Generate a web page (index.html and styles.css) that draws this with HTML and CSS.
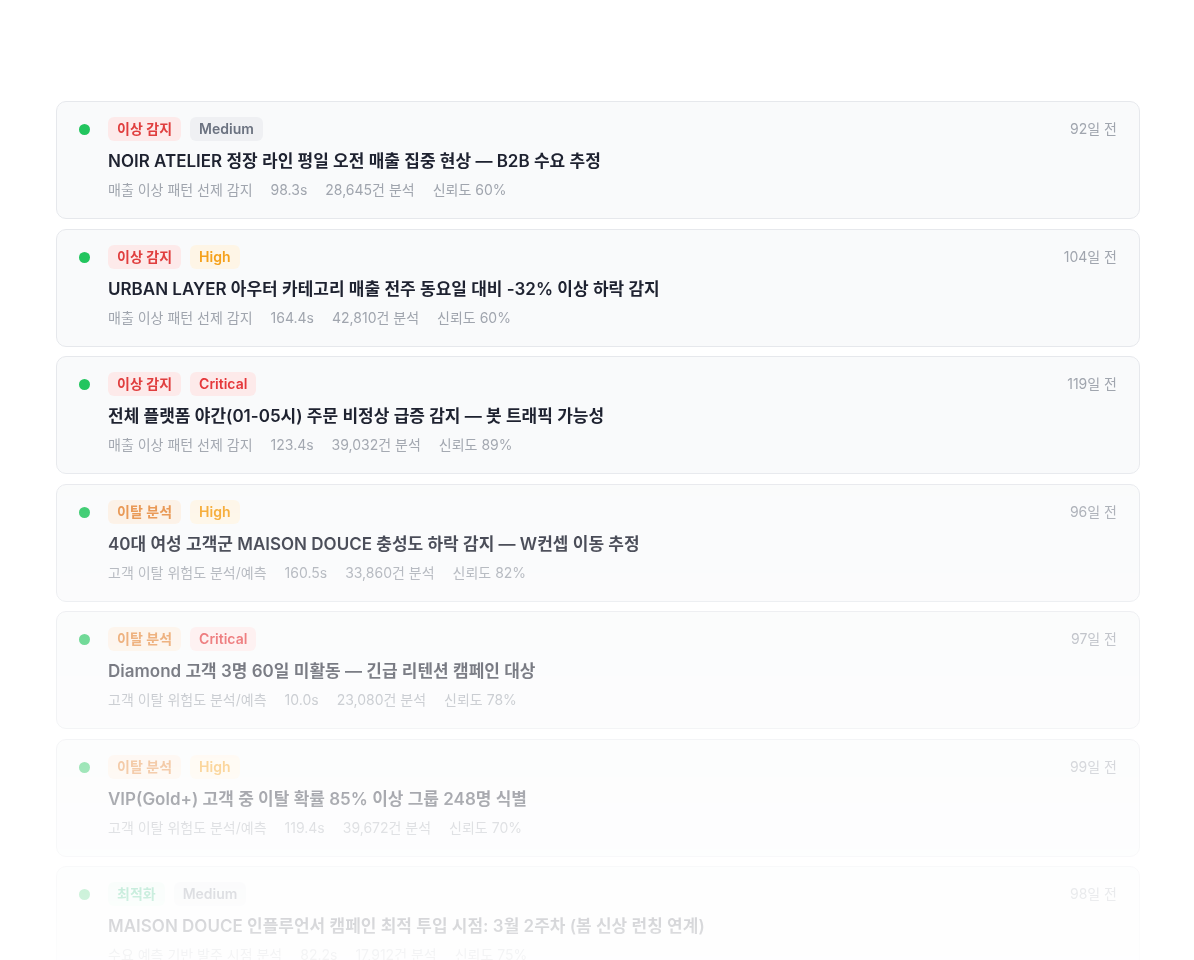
FILE: index.html
```html
<!DOCTYPE html>
<html lang="ko">

<head>
    <meta charset="utf-8">
    <title>AI 인사이트</title>
    <link rel="stylesheet" href="styles.css">
</head>

<body>
    <div class="page">
        <div class="feed">

            <div class="insight">
                <span class="dot"></span>
                <div class="body">
                    <div class="tags">
                        <span class="tag anomaly">이상 감지</span>
                        <span class="tag medium">Medium</span>
                    </div>
                    <div class="title">NOIR ATELIER 정장 라인 평일 오전 매출 집중 현상 — B2B 수요 추정</div>
                    <div class="meta">
                        <span>매출 이상 패턴 선제 감지</span>
                        <span>98.3s</span>
                        <span>28,645건 분석</span>
                        <span>신뢰도 60%</span>
                    </div>
                </div>
                <span class="time">92일 전</span>
            </div>

            <div class="insight">
                <span class="dot"></span>
                <div class="body">
                    <div class="tags">
                        <span class="tag anomaly">이상 감지</span>
                        <span class="tag high">High</span>
                    </div>
                    <div class="title">URBAN LAYER 아우터 카테고리 매출 전주 동요일 대비 -32% 이상 하락 감지</div>
                    <div class="meta">
                        <span>매출 이상 패턴 선제 감지</span>
                        <span>164.4s</span>
                        <span>42,810건 분석</span>
                        <span>신뢰도 60%</span>
                    </div>
                </div>
                <span class="time">104일 전</span>
            </div>

            <div class="insight">
                <span class="dot"></span>
                <div class="body">
                    <div class="tags">
                        <span class="tag anomaly">이상 감지</span>
                        <span class="tag critical">Critical</span>
                    </div>
                    <div class="title">전체 플랫폼 야간(01-05시) 주문 비정상 급증 감지 — 봇 트래픽 가능성</div>
                    <div class="meta">
                        <span>매출 이상 패턴 선제 감지</span>
                        <span>123.4s</span>
                        <span>39,032건 분석</span>
                        <span>신뢰도 89%</span>
                    </div>
                </div>
                <span class="time">119일 전</span>
            </div>

            <div class="insight">
                <span class="dot"></span>
                <div class="body">
                    <div class="tags">
                        <span class="tag churn">이탈 분석</span>
                        <span class="tag high">High</span>
                    </div>
                    <div class="title">40대 여성 고객군 MAISON DOUCE 충성도 하락 감지 — W컨셉 이동 추정</div>
                    <div class="meta">
                        <span>고객 이탈 위험도 분석/예측</span>
                        <span>160.5s</span>
                        <span>33,860건 분석</span>
                        <span>신뢰도 82%</span>
                    </div>
                </div>
                <span class="time">96일 전</span>
            </div>

            <div class="insight">
                <span class="dot"></span>
                <div class="body">
                    <div class="tags">
                        <span class="tag churn">이탈 분석</span>
                        <span class="tag critical">Critical</span>
                    </div>
                    <div class="title">Diamond 고객 3명 60일 미활동 — 긴급 리텐션 캠페인 대상</div>
                    <div class="meta">
                        <span>고객 이탈 위험도 분석/예측</span>
                        <span>10.0s</span>
                        <span>23,080건 분석</span>
                        <span>신뢰도 78%</span>
                    </div>
                </div>
                <span class="time">97일 전</span>
            </div>

            <div class="insight">
                <span class="dot"></span>
                <div class="body">
                    <div class="tags">
                        <span class="tag churn">이탈 분석</span>
                        <span class="tag high">High</span>
                    </div>
                    <div class="title">VIP(Gold+) 고객 중 이탈 확률 85% 이상 그룹 248명 식별</div>
                    <div class="meta">
                        <span>고객 이탈 위험도 분석/예측</span>
                        <span>119.4s</span>
                        <span>39,672건 분석</span>
                        <span>신뢰도 70%</span>
                    </div>
                </div>
                <span class="time">99일 전</span>
            </div>

            <div class="insight">
                <span class="dot"></span>
                <div class="body">
                    <div class="tags">
                        <span class="tag optimize">최적화</span>
                        <span class="tag medium">Medium</span>
                    </div>
                    <div class="title">MAISON DOUCE 인플루언서 캠페인 최적 투입 시점: 3월 2주차 (봄 신상 런칭 연계)</div>
                    <div class="meta">
                        <span>수요 예측 기반 발주 시점 분석</span>
                        <span>82.2s</span>
                        <span>17,912건 분석</span>
                        <span>신뢰도 75%</span>
                    </div>
                </div>
                <span class="time">98일 전</span>
            </div>

        </div>
    </div>
</body>

</html>
```

FILE: styles.css
```css
body {
    margin: 0px;
    background-color: white;
    font-family: 'Inter', 'Noto Sans CJK KR', sans-serif;
    color: #1e2230;
}

.page {
    height: 960px;
    overflow: hidden;
    padding: 101px 54px 0px 56px;
    box-sizing: border-box;
}

/* list fades out toward the bottom */
.feed {
    display: flex;
    flex-direction: column;
    gap: 9.5px;
    -webkit-mask-image: linear-gradient(to bottom, #000 320px, rgba(0, 0, 0, 0.08) 100%);
    mask-image: linear-gradient(to bottom, #000 320px, rgba(0, 0, 0, 0.08) 100%);
}

.insight {
    display: flex;
    align-items: flex-start;
    background-color: #f9fafb;
    border: 1px solid #e6e8ec;
    border-radius: 10px;
    padding: 15px 22px 18px 22px;
}

.dot {
    width: 11px;
    height: 11px;
    border-radius: 50%;
    background-color: #22c55e;
    margin-top: 7px;
    margin-right: 18px;
    flex-shrink: 0;
}

.body {
    flex: 1;
}

.tags {
    display: flex;
    gap: 9px;
}

.tag {
    height: 24px;
    line-height: 24px;
    padding: 0px 9px;
    border-radius: 6px;
    font-size: 14px;
    font-weight: 600;
}

.tag.anomaly {
    background-color: #fdeaea;
    color: #e03e3e;
}

.tag.churn {
    background-color: #fcf0e4;
    color: #e5883a;
}

.tag.optimize {
    background-color: #e8f8f0;
    color: #16b36e;
}

.tag.medium {
    background-color: #eff0f3;
    color: #6b7280;
}

.tag.high {
    background-color: #fef5e6;
    color: #f5a11c;
}

.tag.critical {
    background-color: #fdeaea;
    color: #e5383b;
}

.title {
    margin-top: 8px;
    font-size: 17px;
    line-height: 24px;
    font-weight: 600;
    color: #1e2230;
}

.meta {
    display: flex;
    gap: 18px;
    margin-top: 7px;
    font-size: 14px;
    line-height: 20px;
    color: #a0a5ae;
}

.time {
    font-size: 14px;
    line-height: 24px;
    color: #a0a5ae;
    flex-shrink: 0;
}
```
